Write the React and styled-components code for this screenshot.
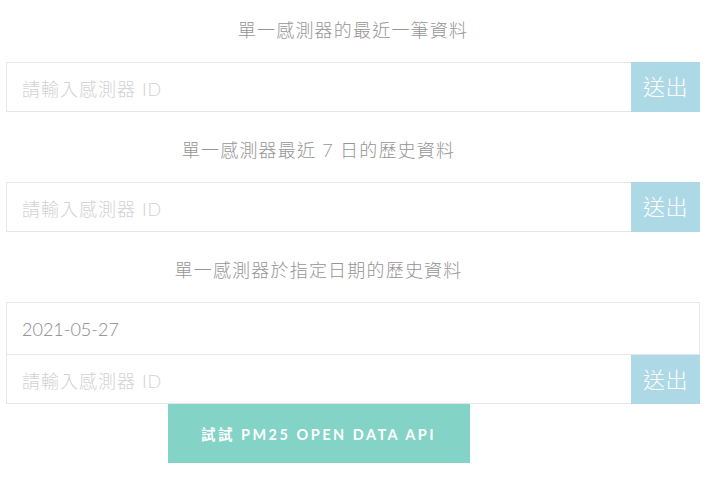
import React, { useState } from 'react'
import styled, { createGlobalStyle } from 'styled-components'

const GlobalStyle = createGlobalStyle`
  body {
    margin: 0;
    background: #fff;
    font-family: 'Lato', 'Noto Sans CJK TC', sans-serif;
  }
`

const App = () => {
  const [date, setDate] = useState('2021-05-27')

  return (<Page>
            <GlobalStyle />

            <Section>
              <Title>單一感測器的最近一筆資料</Title>
              <Row>
                <Field placeholder="請輸入感測器 ID" />
                <SendButton>送出</SendButton>
              </Row>
            </Section>

            <Section>
              <Title $inset>單一感測器最近 7 日的歷史資料</Title>
              <Row>
                <Field placeholder="請輸入感測器 ID" />
                <SendButton>送出</SendButton>
              </Row>
            </Section>

            <Section>
              <Title $inset>單一感測器於指定日期的歷史資料</Title>
              <DateField value={date} onChange={e => setDate(e.target.value)} />
              <Row $joined>
                <Field placeholder="請輸入感測器 ID" />
                <SendButton>送出</SendButton>
              </Row>
              <ApiWrapper>
                <ApiButton>試試 PM25 OPEN DATA API</ApiButton>
              </ApiWrapper>
            </Section>
          </Page>)
}

export default App



const Page = styled.main`
  display: flex;
  flex-direction: column;
  gap: 26px;
  padding: 18px 8px 16px 6px;
`

const Section = styled.section`
  display: flex;
  flex-direction: column;
`

const Title = styled.h2`
  margin: 0 0 20px;
  padding-right: ${({ $inset }) => ($inset ? '69px' : '0')};
  font-size: 18px;
  line-height: 24px;
  font-weight: 300;
  letter-spacing: 1.2px;
  color: #959595;
  text-align: center;
`

const Row = styled.div`
  display: flex;
  height: ${({ $joined }) => ($joined ? '49px' : '50px')};

  input {
    border-top: ${({ $joined }) => ($joined ? 'none' : '1px solid #e6e6e6')};
  }
`

const Field = styled.input`
  flex: 1;
  min-width: 0;
  box-sizing: border-box;
  height: 100%;
  margin: 0;
  padding: 3px 15px 0;
  border: 1px solid #e6e6e6;
  border-right: none;
  outline: none;
  font-family: 'Lato', 'Noto Sans CJK TC', sans-serif;
  font-size: 18px;
  font-weight: 300;
  letter-spacing: 1px;
  color: #7a7a7a;

  &::placeholder {
    color: #d2d2d2;
  }
`

const DateField = styled(Field)`
  flex: none;
  height: 53px;
  padding-top: 0;
  border-right: 1px solid #e6e6e6;
  letter-spacing: 0;
  color: #888;
`

const SendButton = styled.button`
  width: 69px;
  height: 100%;
  margin: 0;
  padding: 0 0 4px;
  border: none;
  background: lightblue;
  color: #fff;
  font-family: 'Lato', 'Noto Sans CJK TC', sans-serif;
  font-size: 22px;
  font-weight: 300;
  letter-spacing: 0.5px;
  cursor: pointer;
`

const ApiWrapper = styled.div`
  display: flex;
  justify-content: center;
  padding-right: 69px;
`

const ApiButton = styled.a`
  display: flex;
  align-items: center;
  justify-content: center;
  width: 302px;
  height: 59px;
  background: #84d3c7;
  color: #fff;
  font-family: 'Lato', 'Noto Sans CJK TC', sans-serif;
  font-size: 14.5px;
  font-weight: 700;
  letter-spacing: 2.5px;
  cursor: pointer;
`
